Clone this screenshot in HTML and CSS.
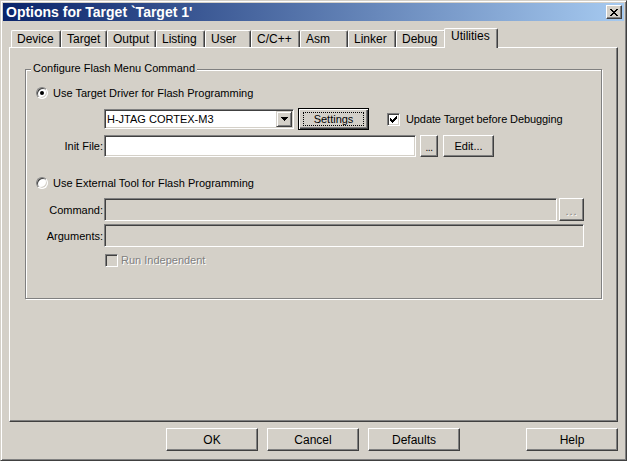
FILE: index.html
```html
<!DOCTYPE html>
<html>
<head>
<meta charset="utf-8">
<title>Options for Target</title>
<link rel="stylesheet" href="styles.css">
</head>
<body>
<div class="window">
  <div class="titlebar">
    <span class="title">Options for Target `Target 1'</span>
    <button class="close" aria-label="Close">
      <svg width="8" height="7" viewBox="0 0 8 7"><path d="M0 0h2v1H0z M6 0h2v1H6z M1 1h2v1H1z M5 1h2v1H5z M2 2h4v1H2z M3 3h2v1H3z M2 4h4v1H2z M1 5h2v1H1z M5 5h2v1H5z M0 6h2v1H0z M6 6h2v1H6z" fill="#000"/></svg>
    </button>
  </div>

  <div class="tabs">
    <div class="tab t-device">Device</div>
    <div class="tab t-target">Target</div>
    <div class="tab t-output">Output</div>
    <div class="tab t-listing">Listing</div>
    <div class="tab t-user">User</div>
    <div class="tab t-cpp">C/C++</div>
    <div class="tab t-asm">Asm</div>
    <div class="tab t-linker">Linker</div>
    <div class="tab t-debug">Debug</div>
    <div class="tab t-util active">Utilities</div>
  </div>

  <div class="panel">
    <div class="group">
      <div class="legend">Configure Flash Menu Command</div>

      <div class="row opt-row">
        <span class="radio on"></span>
        <span>Use Target Driver for Flash Programming</span>
      </div>

      <div class="row driver-row">
        <div class="field combo">
          <span class="combo-text">H-JTAG CORTEX-M3</span>
          <span class="drop"><svg width="7" height="4" viewBox="0 0 7 4"><path d="M0 0h7v1H0z M1 1h5v1H1z M2 2h3v1H2z M3 3h1v1H3z" fill="#000"/></svg></span>
        </div>
        <button class="btn default settings"><span class="focus">Settings</span></button>
        <span class="check on update-check"><svg width="7" height="7" viewBox="0 0 7 7"><path d="M6 0h1v1H6z M5 1h2v1H5z M0 2h1v1H0z M4 2h3v1H4z M0 3h2v1H0z M3 3h3v1H3z M0 4h5v1H0z M1 5h3v1H1z M2 6h1v1H2z" fill="#000"/></svg></span>
        <span class="check-text">Update Target before Debugging</span>
      </div>

      <div class="row init-row">
        <span class="label">Init File:</span>
        <div class="field init-field"></div>
        <button class="btn dots-btn">...</button>
        <button class="btn edit-btn">Edit...</button>
      </div>

      <div class="row opt-row second">
        <span class="radio"></span>
        <span>Use External Tool for Flash Programming</span>
      </div>

      <div class="row cmd-row">
        <span class="label">Command:</span>
        <div class="field disabled cmd-field"></div>
        <button class="btn cmd-dots disabled-text">...</button>
      </div>

      <div class="row args-row">
        <span class="label">Arguments:</span>
        <div class="field disabled args-field"></div>
      </div>

      <div class="row run-row">
        <span class="check disabled"></span>
        <span class="disabled-text">Run Independent</span>
      </div>
    </div>
  </div>

  <div class="buttons">
    <button class="btn">OK</button>
    <button class="btn">Cancel</button>
    <button class="btn">Defaults</button>
    <button class="btn help">Help</button>
  </div>
</div>
</body>
</html>
```

FILE: styles.css
```css
* { box-sizing: border-box; }

html, body {
  margin: 0;
  padding: 0;
}

body {
  width: 627px;
  height: 461px;
  overflow: hidden;
  background: #d4d0c8;
  font-family: "Liberation Sans", Arial, sans-serif;
  font-size: 11px;
  color: #000;
}

.window {
  width: 627px;
  height: 461px;
  display: flex;
  flex-direction: column;
  background: #d4d0c8;
  border: 1px solid;
  border-color: #d4d0c8 #404040 #404040 #d4d0c8;
  box-shadow: inset 1px 1px #fff, inset -1px -1px #808080;
  padding: 2px;
}

/* title bar */
.titlebar {
  flex: none;
  height: 18px;
  display: flex;
  align-items: center;
  justify-content: space-between;
  padding: 0 2px 0 3px;
  background: linear-gradient(to right, #0a246a, #a6caf0);
}

.title {
  color: #fff;
  font-weight: bold;
  font-size: 14px;
  line-height: 18px;
  white-space: nowrap;
}

.close {
  width: 16px;
  height: 14px;
  margin: 0;
  padding: 0;
  display: flex;
  align-items: center;
  justify-content: center;
  background: #d4d0c8;
  border: 1px solid;
  border-color: #fff #404040 #404040 #fff;
  box-shadow: inset -1px -1px #808080;
}

/* tabs */
.tabs {
  flex: none;
  height: 19px;
  margin: 7px 6px 0;
  padding-left: 2px;
  display: flex;
  align-items: flex-end;
}

.tab {
  height: 17px;
  padding-left: 5px;
  font-size: 12px;
  line-height: 16px;
  white-space: nowrap;
  background: #d4d0c8;
  border-top: 1px solid #fff;
  border-left: 1px solid #fff;
  border-right: 1px solid #404040;
  box-shadow: inset -1px 0 #808080;
  border-radius: 2px 2px 0 0;
}

.t-device { width: 50px; }
.t-target { width: 46px; }
.t-output { width: 49px; }
.t-listing { width: 49px; }
.t-user { width: 46px; }
.t-cpp { width: 49px; }
.t-asm { width: 48px; }
.t-linker { width: 48px; }
.t-debug { width: 50px; }
.t-util { width: 50px; }

.tab.active {
  width: 54px;
  height: 20px;
  margin: 0 -2px -1px;
  line-height: 15px;
  padding-left: 6px;
  position: relative;
  z-index: 1;
}

/* tab page */
.panel {
  flex: none;
  height: 375px;
  margin: 0 6px;
  padding: 21px 15px 0;
  border: 1px solid;
  border-color: #fff #404040 #404040 #fff;
  box-shadow: inset -1px -1px #808080;
}

.group {
  border: 1px solid #808080;
  box-shadow: inset 1px 1px #fff, 1px 1px #fff;
  padding-bottom: 31px;
}

.legend {
  width: fit-content;
  margin: -8px 0 0 5px;
  padding: 0 2px;
  line-height: 13px;
  background: #d4d0c8;
  white-space: nowrap;
}

.row {
  display: flex;
  align-items: center;
  white-space: nowrap;
}

.opt-row {
  height: 14px;
  margin-top: 11px;
  line-height: 14px;
}

.opt-row.second { margin-top: 19px; }

.driver-row {
  height: 22px;
  margin-top: 8px;
  padding-left: 78px;
}

.init-row {
  height: 22px;
  margin-top: 5px;
}

.cmd-row {
  height: 23px;
  margin-top: 8px;
}

.args-row {
  height: 23px;
  margin-top: 3px;
}

.run-row {
  height: 14px;
  margin-top: 6px;
  padding-left: 79px;
}

.label {
  flex: none;
  width: 78px;
  padding-right: 1px;
  text-align: right;
}

/* radio */
.radio {
  flex: none;
  width: 12px;
  height: 12px;
  margin: 0 5px 0 10px;
  border-radius: 50%;
  background: #fff;
  border: 1px solid;
  border-color: #808080 #fff #fff #808080;
  box-shadow: inset 1px 1px #404040, inset -1px -1px #d4d0c8;
  display: flex;
  align-items: center;
  justify-content: center;
}

.radio.on::after {
  content: "";
  width: 4px;
  height: 4px;
  border-radius: 50%;
  background: #000;
}

/* checkbox */
.check {
  flex: none;
  width: 13px;
  height: 13px;
  background: #fff;
  border: 1px solid;
  border-color: #808080 #fff #fff #808080;
  box-shadow: inset 1px 1px #404040, inset -1px -1px #d4d0c8;
  display: flex;
  align-items: center;
  justify-content: center;
}

.check.disabled {
  background: #d4d0c8;
  margin-right: 3px;
}

.update-check { margin: 0 6px 0 18px; }

.check-text { letter-spacing: -0.1px; }

/* fields */
.field {
  flex: none;
  height: 22px;
  background: #fff;
  border: 1px solid;
  border-color: #808080 #fff #fff #808080;
  box-shadow: inset 1px 1px #404040, inset -1px -1px #d4d0c8;
}

.field.disabled { background: #d4d0c8; }

.combo {
  width: 190px;
  height: 20px;
  padding: 1px;
  display: flex;
  align-items: stretch;
}

.combo-text {
  flex: 1;
  padding-left: 1px;
  line-height: 16px;
}

.drop {
  width: 16px;
  height: 16px;
  display: flex;
  align-items: center;
  justify-content: center;
  background: #d4d0c8;
  border: 1px solid;
  border-color: #d4d0c8 #404040 #404040 #d4d0c8;
  box-shadow: inset 1px 1px #fff, inset -1px -1px #808080;
}

.init-field { width: 312px; }
.cmd-field { width: 453px; height: 23px; }
.args-field { width: 480px; height: 23px; }

/* buttons */
.btn {
  flex: none;
  margin: 0;
  padding: 0;
  font-family: inherit;
  font-size: 11px;
  color: #000;
  background: #d4d0c8;
  border: 1px solid;
  border-color: #fff #404040 #404040 #fff;
  box-shadow: inset -1px -1px #808080;
  display: flex;
  align-items: center;
  justify-content: center;
  white-space: nowrap;
}

.btn.default {
  border-color: #000;
  box-shadow: inset 1px 1px #fff, inset -1px -1px #404040, inset -2px -2px #808080;
  padding: 3px 4px;
  align-items: stretch;
}

.focus {
  flex: 1;
  display: flex;
  align-items: center;
  justify-content: center;
  border: 1px dotted #000;
}

.settings {
  width: 71px;
  height: 22px;
  margin-left: 4px;
}

.dots-btn {
  width: 18px;
  height: 22px;
  margin-left: 4px;
  font-size: 10px;
  letter-spacing: -0.5px;
  padding-top: 3px;
}

.edit-btn {
  width: 51px;
  height: 22px;
  margin-left: 5px;
}

.cmd-dots {
  width: 25px;
  height: 23px;
  margin-left: 2px;
  font-size: 11px;
  letter-spacing: 1px;
  padding-top: 3px;
}

.disabled-text,
.btn.disabled-text {
  color: #808080;
  text-shadow: 1px 1px 0 #fff;
}

.buttons {
  flex: none;
  display: flex;
  gap: 9px;
  height: 23px;
  margin: 6px 6px 0;
  padding-left: 157px;
}

.buttons .btn {
  width: 92px;
  height: 23px;
  font-size: 12px;
}

.buttons .help { margin-left: auto; }
```
